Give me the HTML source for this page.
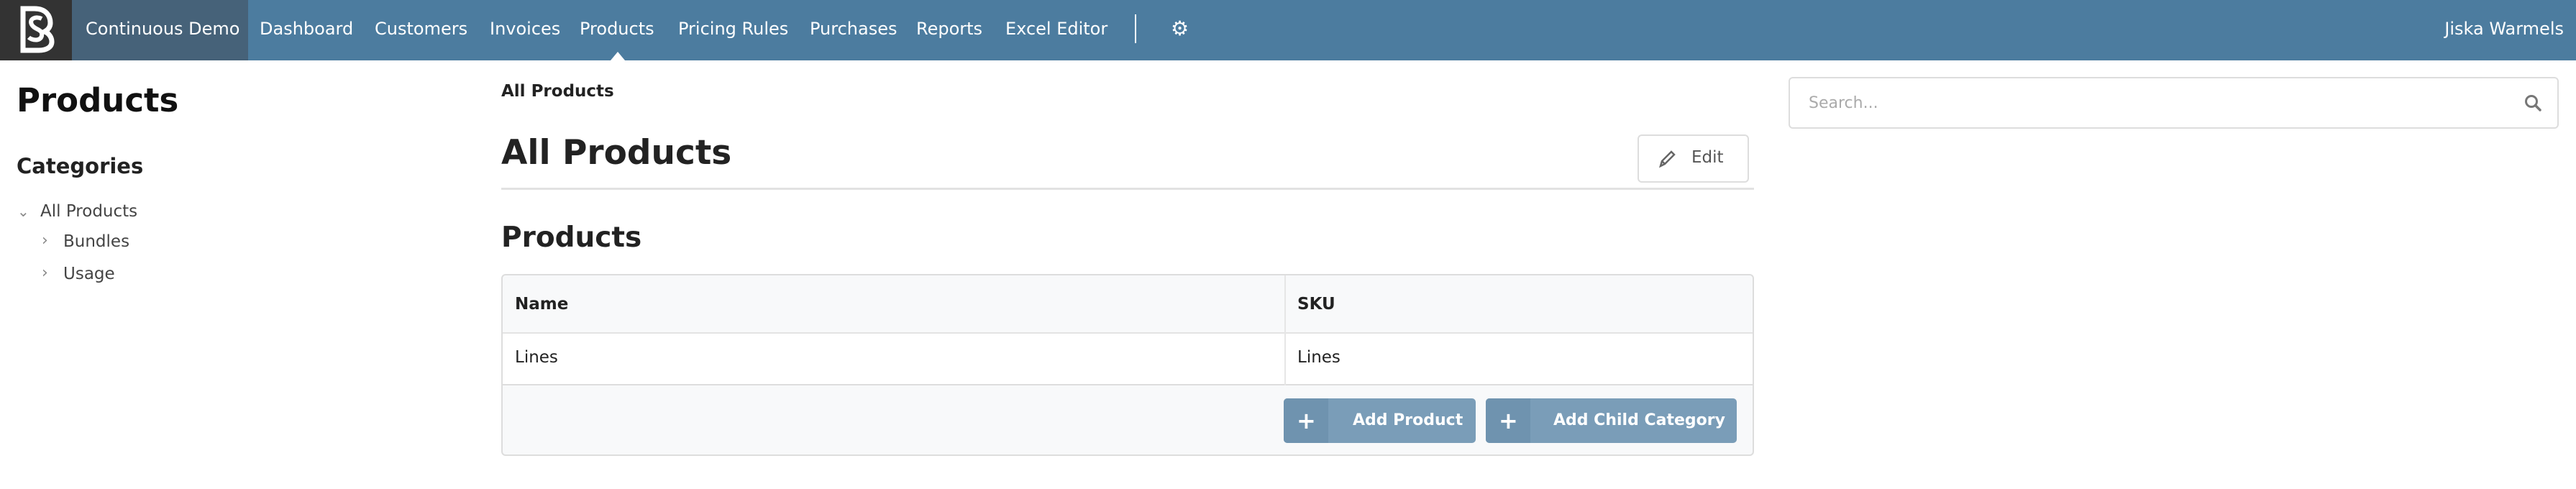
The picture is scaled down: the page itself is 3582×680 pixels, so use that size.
<!DOCTYPE html>
<html><head><meta charset="utf-8"><style>
*{margin:0;padding:0;box-sizing:border-box}
body{width:3582px;height:680px;background:#fff;font-family:"DejaVu Sans","Liberation Sans",sans-serif;color:#222;position:relative;overflow:hidden}
.a{position:absolute;white-space:nowrap}
.nav{position:absolute;left:0;top:0;width:3582px;height:84px;background:#4c7c9f}
.nav .t{position:absolute;top:0;line-height:80px;color:#fff;font-size:24px}
</style></head><body>
<div class="nav">
  <div class="a" style="left:0;top:0;width:100px;height:84px;background:#333"></div>
  <svg class="a" style="left:24px;top:8px" width="52" height="66" viewBox="0 0 52 66"><path d="M8 4 H24 C40 4 46 14 46 24 C46 30 42 34 38 36 C44 38 48 44 48 50 C48 58 40 62 30 62 H8 Z" fill="none" stroke="#fff" stroke-width="7"/><path d="M34 18 C26 14 16 18 20 26 C24 34 36 32 34 42 C32 50 20 48 16 44" fill="none" stroke="#fff" stroke-width="6"/></svg>
  <div class="a" style="left:100px;top:0;width:245px;height:84px;background:#466279"></div>
  <div class="t" style="left:119px">Continuous Demo</div>
  <div class="t" style="left:361px">Dashboard</div>
  <div class="t" style="left:521px">Customers</div>
  <div class="t" style="left:681px">Invoices</div>
  <div class="t" style="left:806px">Products</div>
  <div class="t" style="left:943px">Pricing Rules</div>
  <div class="t" style="left:1126px">Purchases</div>
  <div class="t" style="left:1274px">Reports</div>
  <div class="t" style="left:1398px">Excel Editor</div>
  <div class="a" style="left:1578px;top:20px;width:2px;height:40px;background:#fff"></div>
  <div class="t" style="left:1628px;font-size:28px;font-weight:bold">⚙</div>
  <div class="t" style="right:17px">Jiska Warmels</div>
  <div class="a" style="left:849px;top:72px;width:0;height:0;border-left:10px solid transparent;border-right:10px solid transparent;border-bottom:12px solid #fff"></div>
</div>

<div class="a" style="left:23px;top:113px;font-size:45px;font-weight:bold;color:#111">Products</div>
<div class="a" style="left:23px;top:214px;font-size:29px;font-weight:bold;color:#222">Categories</div>
<div class="a" style="left:24px;top:282px;font-size:20px;color:#888">⌄</div>
<div class="a" style="left:56px;top:281px;font-size:23px;color:#444">All Products</div>
<div class="a" style="left:58px;top:322px;font-size:22px;color:#888">›</div>
<div class="a" style="left:88px;top:323px;font-size:23px;color:#444">Bundles</div>
<div class="a" style="left:58px;top:367px;font-size:22px;color:#888">›</div>
<div class="a" style="left:88px;top:368px;font-size:23px;color:#444">Usage</div>

<div class="a" style="left:697px;top:114px;font-size:23px;font-weight:bold;color:#222">All Products</div>
<div class="a" style="left:697px;top:185px;font-size:47px;font-weight:bold;color:#222">All Products</div>
<div class="a" style="left:2277px;top:187px;width:155px;height:67px;border:2px solid #ddd;border-radius:6px;background:#fff"></div>
<svg class="a" style="left:2305px;top:207px" width="26" height="28" viewBox="0 0 26 28"><path d="M4 24 L6 17 L19 4 L23 8 L10 21 Z M6 17 L10 21" fill="none" stroke="#666" stroke-width="2.5"/></svg>
<div class="a" style="left:2352px;top:206px;font-size:23px;color:#555">Edit</div>
<div class="a" style="left:697px;top:261px;width:1742px;height:3px;background:#e2e2e2"></div>

<div class="a" style="left:697px;top:308px;font-size:39px;font-weight:bold;color:#222">Products</div>

<div class="a" style="left:697px;top:381px;width:1742px;height:253px;border:2px solid #ddd;border-radius:6px;background:#f8f9fa;overflow:hidden">
  <div class="a" style="left:0;top:79px;width:100%;height:74px;background:#fff;border-top:2px solid #e3e3e3;border-bottom:2px solid #ddd"></div>
  <div class="a" style="left:1087px;top:0;width:2px;height:153px;background:#e6e6e6"></div>
  <div class="a" style="left:17px;top:27px;font-size:23px;font-weight:bold;color:#222">Name</div>
  <div class="a" style="left:1105px;top:27px;font-size:23px;font-weight:bold;color:#222">SKU</div>
  <div class="a" style="left:17px;top:101px;font-size:23px;color:#222">Lines</div>
  <div class="a" style="left:1105px;top:101px;font-size:23px;color:#222">Lines</div>
  <div class="a" style="left:1086px;top:171px;width:267px;height:62px;background:#7a9db8;border-radius:5px;overflow:hidden">
    <div class="a" style="left:0;top:0;width:62px;height:62px;background:#6f93af"></div>
    <div class="a" style="left:18px;top:12px;font-size:32px;font-weight:bold;color:#fff">+</div>
    <div class="a" style="left:96px;top:18px;font-size:22px;font-weight:bold;color:#fff">Add Product</div>
  </div>
  <div class="a" style="left:1367px;top:171px;width:349px;height:62px;background:#7a9db8;border-radius:5px;overflow:hidden">
    <div class="a" style="left:0;top:0;width:62px;height:62px;background:#6f93af"></div>
    <div class="a" style="left:18px;top:12px;font-size:32px;font-weight:bold;color:#fff">+</div>
    <div class="a" style="left:94px;top:18px;font-size:22px;font-weight:bold;color:#fff">Add Child Category</div>
  </div>
</div>

<div class="a" style="left:2487px;top:107px;width:1071px;height:72px;border:2px solid #ddd;border-radius:6px;background:#fff"></div>
<div class="a" style="left:2515px;top:131px;font-size:22px;color:#aaa">Search...</div>
<svg class="a" style="left:3510px;top:131px" width="26" height="26" viewBox="0 0 26 26"><circle cx="10" cy="10" r="7.5" fill="none" stroke="#777" stroke-width="3"/><path d="M15.5 15.5 L22 22" stroke="#777" stroke-width="3.5" stroke-linecap="round"/></svg>
</body></html>
